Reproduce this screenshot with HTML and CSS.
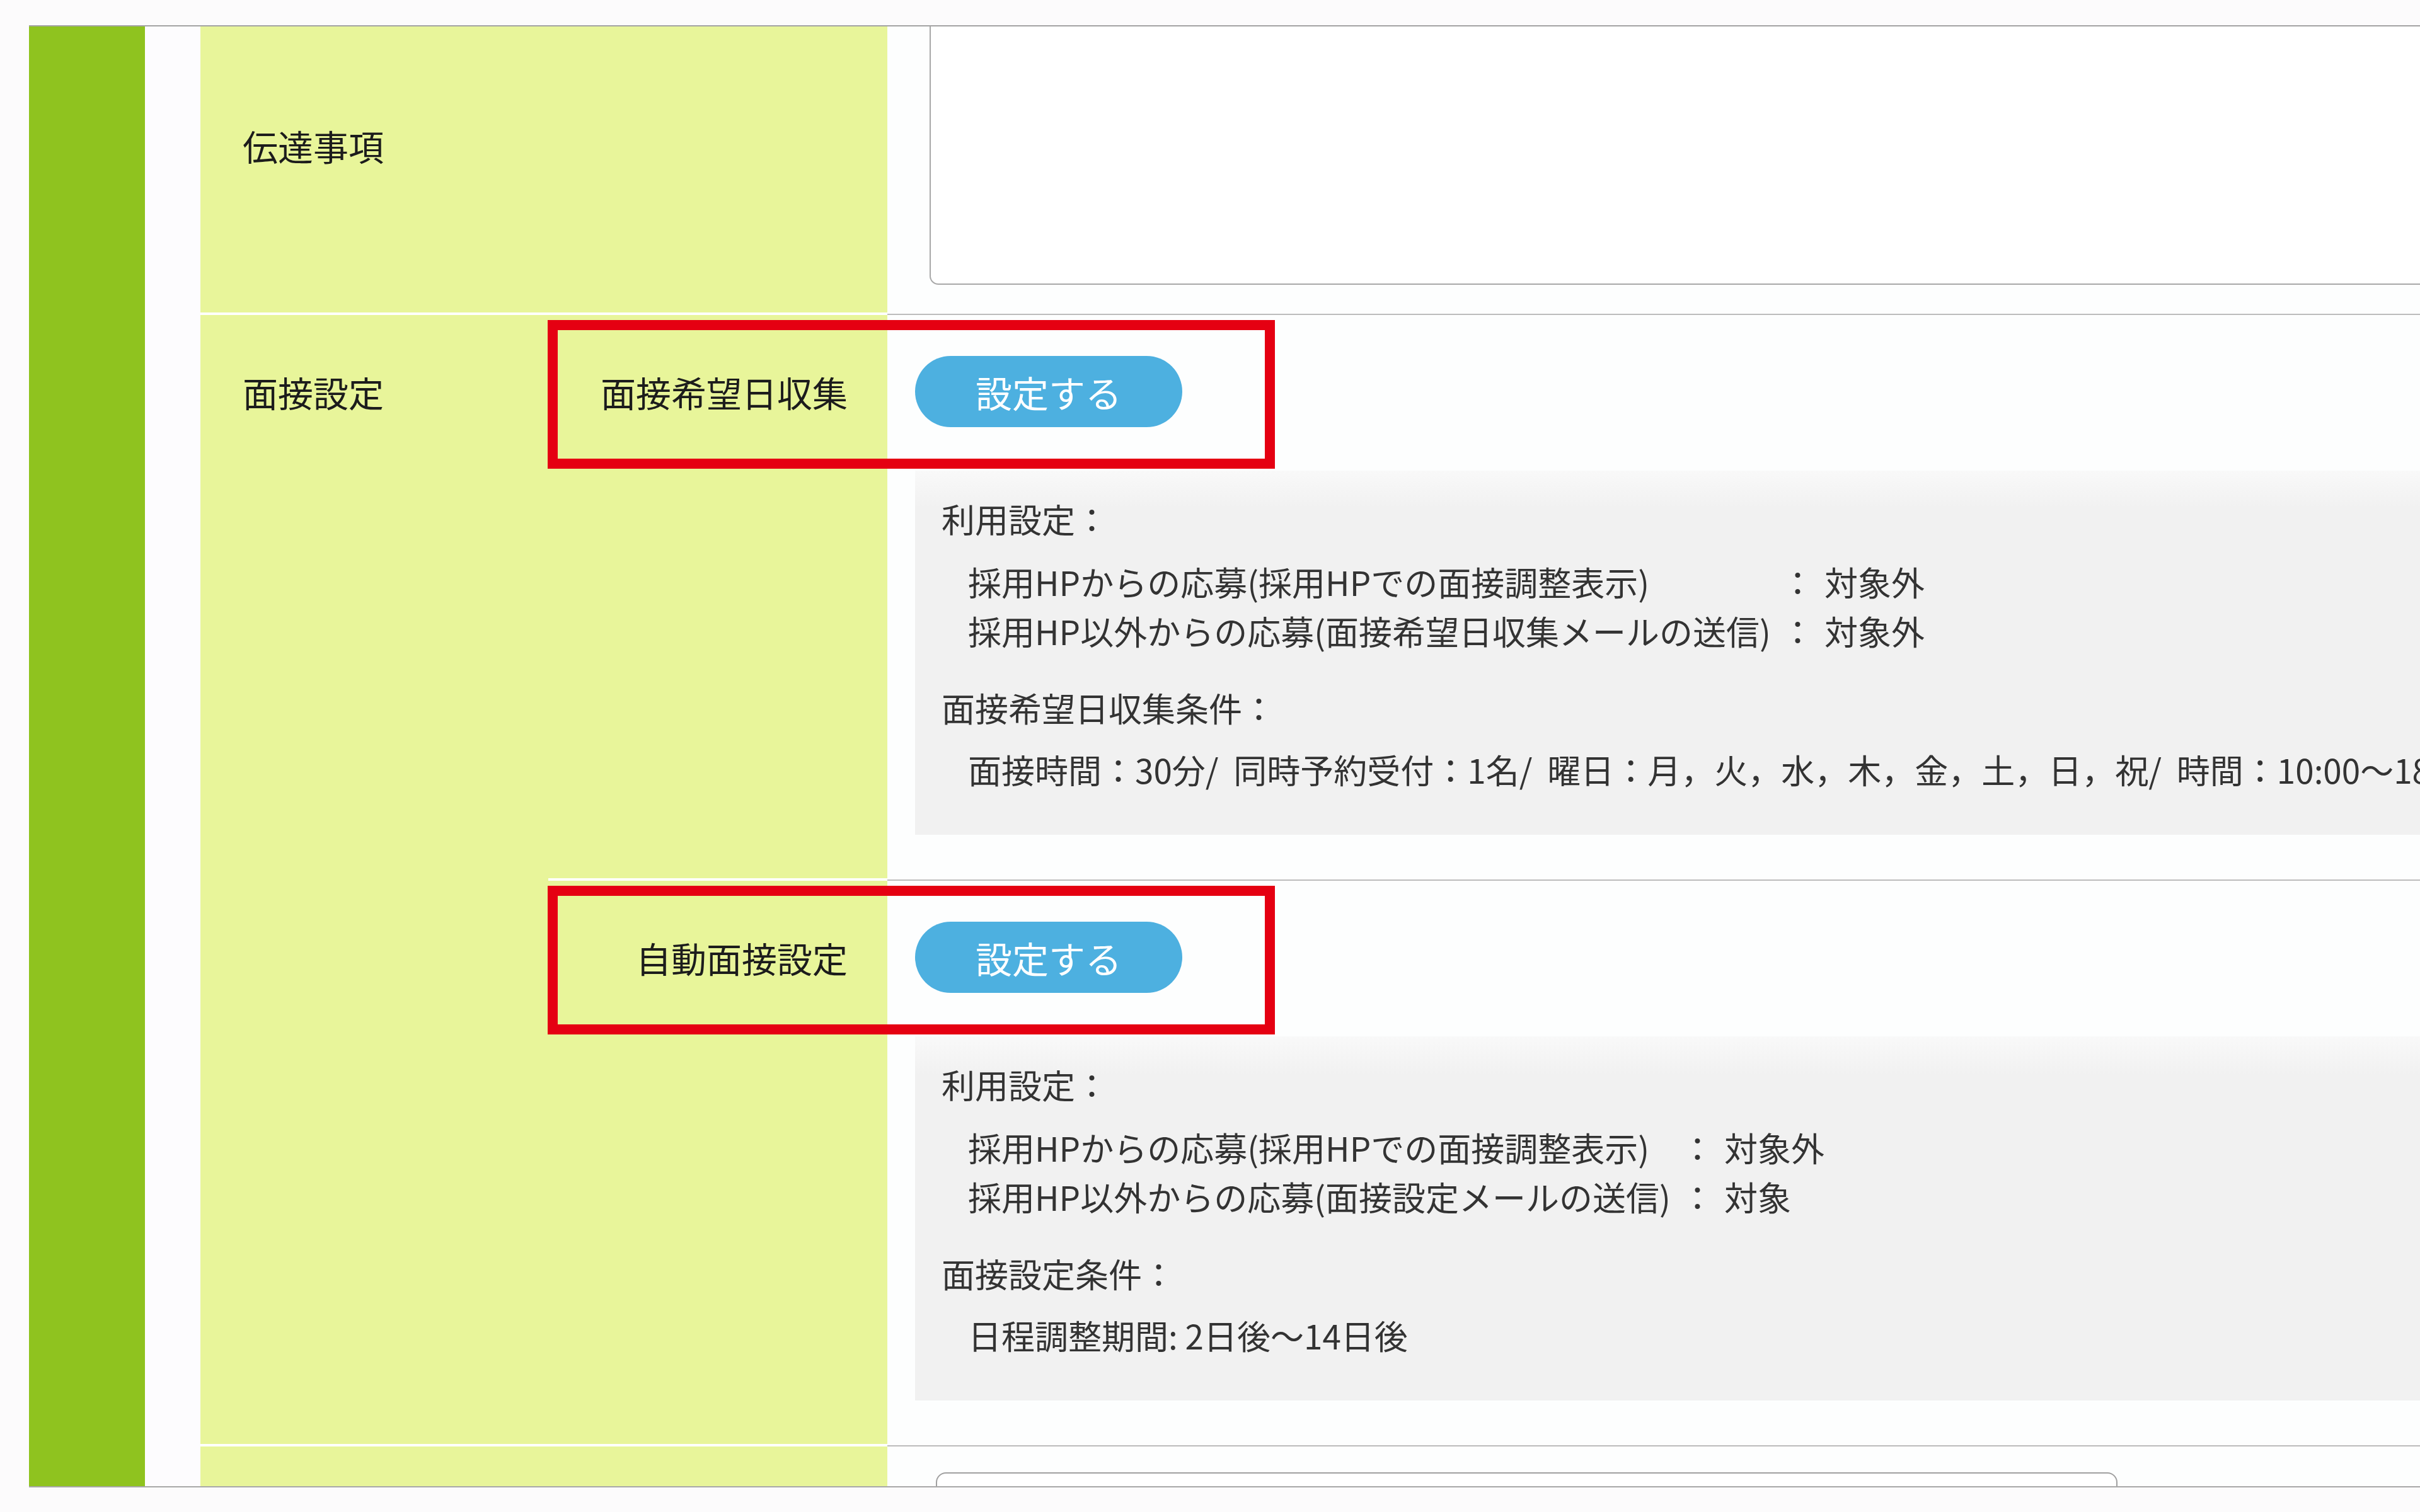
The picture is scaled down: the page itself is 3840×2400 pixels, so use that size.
FILE: index.html
```html
<!DOCTYPE html>
<html lang="ja">
<head>
    <meta charset="UTF-8">
    <meta name="viewport" content="width=device-width, initial-scale=1.0">
    <title>面接設定</title>
    <link rel="stylesheet" href="styles.css">
</head>
<body>
    <div class="frame">
        <div class="side-bar"></div>
        <div class="side-gap"></div>

        <div class="form-table">
            <!-- 伝達事項 -->
            <div class="row row-notice">
                <div class="label label-wide">伝達事項</div>
                <div class="cell cell-notice">
                    <textarea class="notice-input"></textarea>
                </div>
            </div>

            <!-- 面接設定 -->
            <div class="row">
                <div class="label label-main">面接設定</div>
                <div class="sub-rows">
                    <div class="sub-row">
                        <div class="sub-label">面接希望日収集</div>
                        <div class="cell cell-setting">
                            <button type="button" class="btn-set">設定する</button>
                            <div class="info-panel">
                                <p class="info-title">利用設定：</p>
                                <div class="info-list">
                                    <span>採用HPからの応募(採用HPでの面接調整表示)</span><span>：</span><span>対象外</span>
                                    <span>採用HP以外からの応募(面接希望日収集メールの送信)</span><span>：</span><span>対象外</span>
                                </div>
                                <p class="info-title">面接希望日収集条件：</p>
                                <p class="info-line">面接時間：30分/ &nbsp;同時予約受付：1名/ &nbsp;曜日：月，火，水，木，金，土，日，祝/ &nbsp;時間：10:00〜18:00</p>
                            </div>
                        </div>
                        <div class="mark"></div>
                    </div>

                    <div class="sub-row">
                        <div class="sub-label">自動面接設定</div>
                        <div class="cell cell-setting">
                            <button type="button" class="btn-set">設定する</button>
                            <div class="info-panel">
                                <p class="info-title">利用設定：</p>
                                <div class="info-list">
                                    <span>採用HPからの応募(採用HPでの面接調整表示)</span><span>：</span><span>対象外</span>
                                    <span>採用HP以外からの応募(面接設定メールの送信)</span><span>：</span><span>対象</span>
                                </div>
                                <p class="info-title">面接設定条件：</p>
                                <p class="info-line">日程調整期間: 2日後〜14日後</p>
                            </div>
                        </div>
                        <div class="mark"></div>
                    </div>
                </div>
            </div>

            <!-- 次の項目（一部のみ表示） -->
            <div class="row row-last">
                <div class="label label-wide"></div>
                <div class="cell cell-last">
                    <input type="text" class="stub-input">
                </div>
            </div>
        </div>
    </div>
</body>
</html>
```

FILE: styles.css
```css
html, body {
    overflow: hidden;
}
body {
    margin: 0;
    background-color: #fcfbfc;
    font-family: "Noto Sans CJK JP", sans-serif;
    color: #1c1c1c;
}
.frame {
    display: flex;
    width: 4200px;
    height: 2321px;
    margin: 40px 0 0 46px;
    border-top: 2px solid #a3a3a3;
    border-bottom: 2px solid #a8a8a8;
    box-sizing: border-box;
    overflow: hidden;
    background: #fff;
}
.side-bar {
    flex: none;
    width: 184px;
    background-color: #8fc31f;
}
.side-gap {
    flex: none;
    width: 88px;
    background-color: #fdfcfe;
}
.form-table {
    flex: 1;
    display: flex;
    flex-direction: column;
}
.row {
    display: flex;
}
.row-notice {
    height: 458px;
}
.row-last {
    flex: 1;
    min-height: 0;
}

/* 見出しセル */
.label {
    flex: none;
    box-sizing: border-box;
    background-color: #e8f59a;
    font-size: 56px;
    line-height: 80px;
    padding-left: 67px;
    border-bottom: 4px solid #fff;
    white-space: nowrap;
}
.label-wide {
    width: 1090px;
    padding-top: 149px;
}
.label-main {
    width: 552px;
    padding-top: 82px;
}
.row-last .label {
    border-bottom: none;
}
.sub-rows {
    flex: 1;
    display: flex;
    flex-direction: column;
}
.sub-row {
    display: flex;
    position: relative;
}
.sub-label {
    flex: none;
    width: 538px;
    box-sizing: border-box;
    background-color: #e8f59a;
    font-size: 56px;
    line-height: 80px;
    text-align: right;
    padding: 82px 63px 0 0;
    border-bottom: 4px solid #fff;
    white-space: nowrap;
}

/* 入力セル */
.cell {
    flex: 1;
    min-width: 0;
    background-color: #fdfefe;
    border-bottom: 2px solid #bcbcbc;
}
.cell-notice {
    display: flex;
    padding: 0 0 46px 67px;
}
.notice-input {
    flex: none;
    width: 2700px;
    border: 2px solid #a8a8a8;
    border-top: none;
    border-radius: 0 0 0 14px;
    background: #fff;
    resize: none;
    outline: none;
}
.cell-setting {
    padding: 65px 0 71px 44px;
}
.cell-last {
    border-bottom: none;
    padding: 41px 0 0 77px;
    overflow: hidden;
}
.stub-input {
    display: block;
    width: 1867px;
    height: 100px;
    border: 2px solid #a0a0a0;
    border-radius: 16px;
    background: #fff;
}

.btn-set {
    display: block;
    width: 424px;
    height: 113px;
    padding: 0;
    border: none;
    border-radius: 57px;
    background-color: #4db0e0;
    color: #fff;
    font-family: inherit;
    font-size: 58px;
    cursor: pointer;
}

/* 設定内容 */
.info-panel {
    margin-top: 69px;
    padding: 37px 0 65px 42px;
    background: linear-gradient(#f9f9f9, #f1f1f1 60px);
    color: #333;
    font-size: 53px;
    line-height: 78px;
    white-space: nowrap;
}
.info-title {
    margin: 0;
}
.info-list {
    display: grid;
    grid-template-columns: max-content max-content max-content;
    column-gap: 16px;
    margin: 22px 0 44px 42px;
}
.info-line {
    margin: 20px 0 0 42px;
}

/* 注目枠 */
.mark {
    position: absolute;
    top: 8px;
    left: -1px;
    width: 1154px;
    height: 236px;
    box-sizing: border-box;
    border: 16px solid #e50012;
    pointer-events: none;
}
```
